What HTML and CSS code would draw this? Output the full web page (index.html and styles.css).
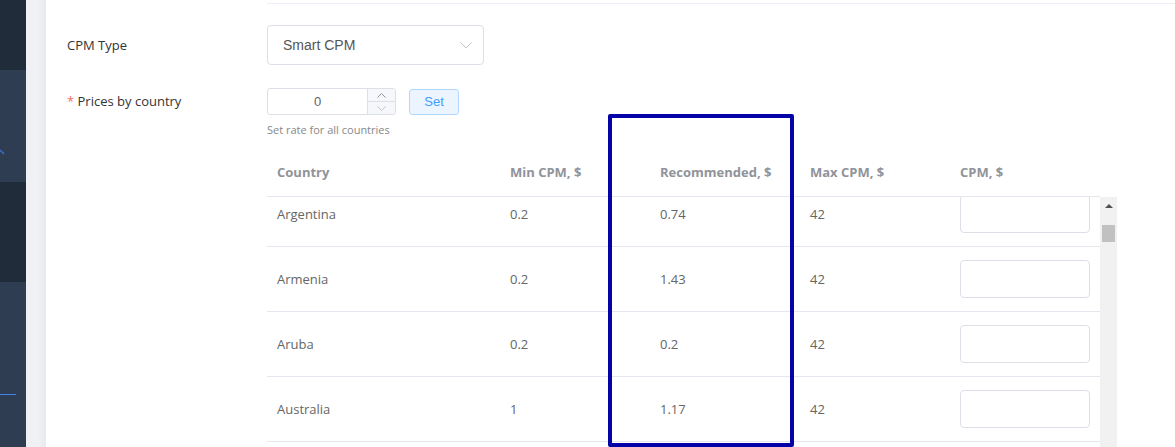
FILE: index.html
```html
<!DOCTYPE html>
<html lang="en">
<head>
    <meta charset="UTF-8">
    <meta name="viewport" content="width=device-width, initial-scale=1.0">
    <title>Prices by country</title>
    <link rel="stylesheet" href="styles.css">
</head>
<body>
    <aside class="sidebar">
        <div class="side-block dark" style="height: 70px"></div>
        <div class="side-block light" style="height: 112px">
            <svg class="side-arrow" width="6" height="8" viewBox="0 0 6 8"><path d="M0 1 L4 5" stroke="#3b6fd6" stroke-width="1.4" fill="none"/></svg>
        </div>
        <div class="side-block dark" style="height: 100px"></div>
        <div class="side-block light grow">
            <div class="side-line"></div>
        </div>
    </aside>
    <div class="gutter"></div>
    <main class="main">
        <div class="top-line"></div>

        <div class="form-row">
            <label class="form-label">CPM Type</label>
            <div class="select">
                <span>Smart CPM</span>
                <svg class="chevron" width="12" height="7" viewBox="0 0 12 7"><path d="M0.5 0.5 L6 6 L11.5 0.5" stroke="#c0c4cc" stroke-width="1" fill="none"/></svg>
            </div>
        </div>

        <div class="form-row prices">
            <label class="form-label"><span class="star">*</span> Prices by country</label>
            <div class="prices-body">
                <div class="rate-line">
                    <div class="number">
                        <span class="number-value">0</span>
                        <div class="spin">
                            <div class="spin-btn">
                                <svg width="9" height="5" viewBox="0 0 9 5"><path d="M0.5 4.5 L4.5 0.5 L8.5 4.5" stroke="#909399" stroke-width="1" fill="none"/></svg>
                            </div>
                            <div class="spin-btn down">
                                <svg width="9" height="5" viewBox="0 0 9 5"><path d="M0.5 0.5 L4.5 4.5 L8.5 0.5" stroke="#c0c4cc" stroke-width="1" fill="none"/></svg>
                            </div>
                        </div>
                    </div>
                    <button class="set-btn">Set</button>
                </div>
                <div class="hint">Set rate for all countries</div>

                <div class="table">
                    <div class="thead">
                        <div class="cell c1">Country</div>
                        <div class="cell c2">Min CPM, $</div>
                        <div class="cell c3">Recommended, $</div>
                        <div class="cell c4">Max CPM, $</div>
                        <div class="cell c5">CPM, $</div>
                    </div>
                    <div class="tbody-wrap">
                        <div class="tbody" id="tbody">
                            <div class="row">
                                <div class="cell c1">Argentina</div>
                                <div class="cell c2">0.2</div>
                                <div class="cell c3">0.74</div>
                                <div class="cell c4">42</div>
                                <div class="cell c5"><input class="cpm-input" type="text"></div>
                            </div>
                            <div class="row">
                                <div class="cell c1">Armenia</div>
                                <div class="cell c2">0.2</div>
                                <div class="cell c3">1.43</div>
                                <div class="cell c4">42</div>
                                <div class="cell c5"><input class="cpm-input" type="text"></div>
                            </div>
                            <div class="row">
                                <div class="cell c1">Aruba</div>
                                <div class="cell c2">0.2</div>
                                <div class="cell c3">0.2</div>
                                <div class="cell c4">42</div>
                                <div class="cell c5"><input class="cpm-input" type="text"></div>
                            </div>
                            <div class="row">
                                <div class="cell c1">Australia</div>
                                <div class="cell c2">1</div>
                                <div class="cell c3">1.17</div>
                                <div class="cell c4">42</div>
                                <div class="cell c5"><input class="cpm-input" type="text"></div>
                            </div>
                        </div>
                        <div class="scrollbar">
                            <div class="scroll-up"></div>
                            <div class="scroll-thumb"></div>
                        </div>
                    </div>
                </div>
            </div>
        </div>
    </main>
    <!-- annotation frame drawn over the Recommended column -->
    <div class="highlight"></div>
    <script src="script.js"></script>
</body>
</html>
```

FILE: styles.css
```css
* {
    box-sizing: border-box;
}
html, body {
    height: 100%;
}
body {
    margin: 0;
    display: flex;
    overflow: hidden;
    font-family: "Open Sans", "Noto Sans", sans-serif;
    font-size: 13px;
    color: #333;
    background-color: #fff;
}

/* sidebar */
.sidebar {
    width: 26px;
    display: flex;
    flex-direction: column;
    flex-shrink: 0;
}
.side-block {
    position: relative;
}
.side-block.dark {
    background-color: #212c3b;
}
.side-block.light {
    background-color: #2e3d52;
}
.side-block.grow {
    flex: 1;
}
.side-arrow {
    position: absolute;
    left: 0;
    top: 79px;
}
.side-line {
    position: absolute;
    left: 0;
    top: 112px;
    width: 16px;
    height: 1px;
    background-color: #3f87e6;
}
.gutter {
    width: 20px;
    flex-shrink: 0;
    background: linear-gradient(to right, #eff1f5 0, #eff1f5 12px, #e7e9ed 20px);
}

/* main */
.main {
    flex: 1;
    padding-left: 21px;
}
.top-line {
    margin-left: 200px;
    height: 4px;
    border-bottom: 1px solid #ebeef5;
}
.form-row {
    display: flex;
    align-items: center;
    margin-top: 21px;
}
.form-label {
    width: 200px;
    flex-shrink: 0;
    color: #333;
    font-size: 13px;
}
.star {
    color: #f56c6c;
}
.select {
    width: 217px;
    height: 40px;
    border: 1px solid #dcdfe6;
    border-radius: 4px;
    display: flex;
    align-items: center;
    justify-content: space-between;
    padding: 0 11px 0 15px;
    font-family: "Liberation Sans", Arial, sans-serif;
    font-size: 14px;
    color: #555;
}
.form-row.prices {
    margin-top: 23px;
    align-items: flex-start;
}
.prices .form-label {
    line-height: 27px;
}
.prices-body {
    display: flex;
    flex-direction: column;
}
.rate-line {
    display: flex;
    align-items: center;
    gap: 13px;
}
.number {
    width: 129px;
    height: 27px;
    border: 1px solid #dcdfe6;
    border-radius: 3px;
    display: flex;
    font-family: "Liberation Sans", Arial, sans-serif;
    font-size: 13px;
    color: #606266;
}
.number-value {
    flex: 1;
    text-align: center;
    line-height: 25px;
}
.spin {
    width: 28px;
    border-left: 1px solid #dcdfe6;
    background-color: #f5f7fa;
    display: flex;
    flex-direction: column;
    border-radius: 0 3px 3px 0;
}
.spin-btn {
    flex: 1;
    display: flex;
    align-items: center;
    justify-content: center;
}
.spin-btn.down {
    border-top: 1px solid #dcdfe6;
}
.set-btn {
    width: 50px;
    height: 26px;
    border: 1px solid #b3d8ff;
    border-radius: 3px;
    background-color: #ecf5ff;
    color: #409eff;
    font-family: "Liberation Sans", Arial, sans-serif;
    font-size: 13px;
    padding: 0;
}
.hint {
    margin-top: 7px;
    font-size: 11px;
    color: #888;
    line-height: 16px;
}

/* table */
.table {
    margin-top: 12px;
    width: 850px;
}
.thead {
    display: flex;
    height: 47px;
    align-items: center;
    padding-bottom: 2px;
    border-bottom: 1px solid #e4e7ed;
    width: 833px;
    font-weight: 700;
    color: #909399;
}
.cell {
    padding-left: 10px;
    flex-shrink: 0;
}
.c1 { width: 233px; }
.c2, .c3, .c4, .c5 { width: 150px; }
.tbody-wrap {
    display: flex;
    height: 260px;
}
.tbody {
    width: 833px;
    overflow: hidden;
    padding-bottom: 30px;
}
.row {
    display: flex;
    align-items: center;
    height: 65px;
    border-bottom: 1px solid #e4e7ed;
    color: #666;
}
.cpm-input {
    width: 130px;
    height: 38px;
    border: 1px solid #dcdfe6;
    border-radius: 4px;
    outline: none;
    display: block;
}
.scrollbar {
    width: 17px;
    background-color: #f1f1f1;
    display: flex;
    flex-direction: column;
    align-items: center;
}
.scroll-up {
    margin-top: 7px;
    width: 0;
    height: 0;
    border-left: 4px solid transparent;
    border-right: 4px solid transparent;
    border-bottom: 4px solid #505050;
}
.scroll-thumb {
    margin-top: 17px;
    width: 13px;
    height: 17px;
    background-color: #c1c1c1;
}

/* annotation */
.highlight {
    position: absolute;
    left: 608px;
    top: 114px;
    width: 186px;
    height: 333px;
    border: 4px solid #0303a8;
    border-radius: 2px;
}
```

FILE: script.js
```js
// list is already scrolled a little
document.getElementById('tbody').scrollTop = 15;
```
